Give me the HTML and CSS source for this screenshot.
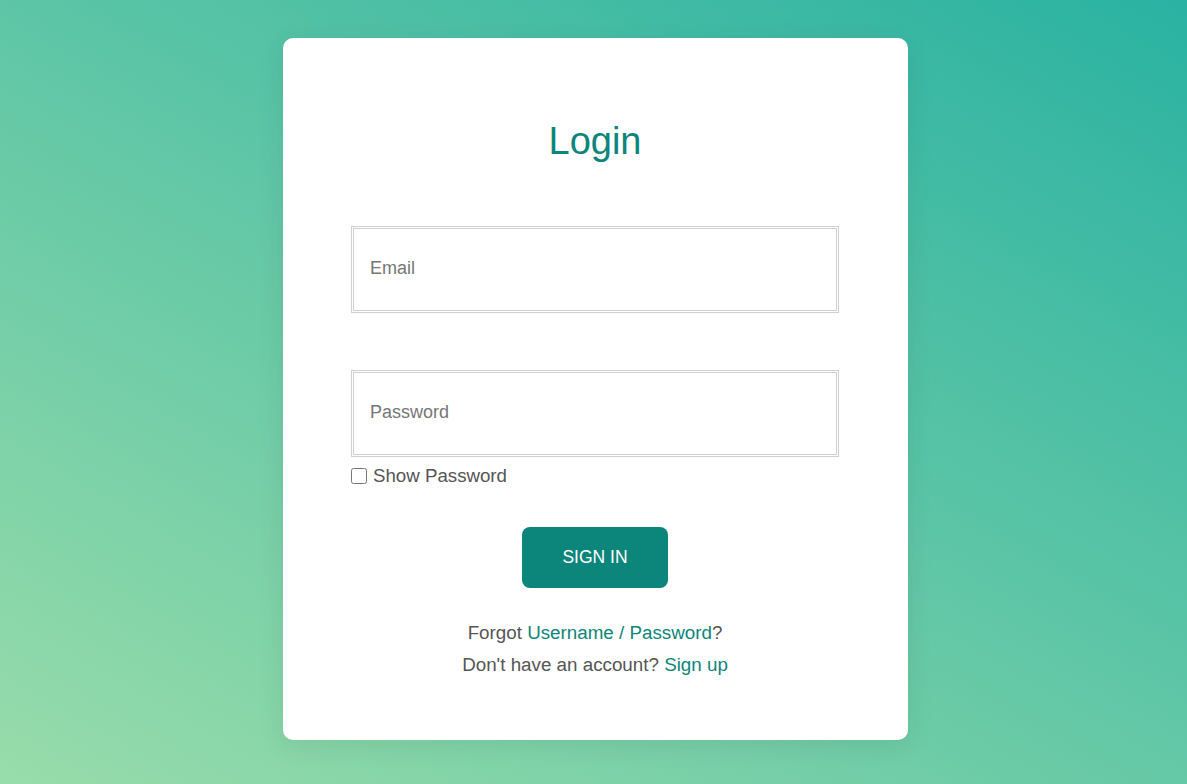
FILE: index.html
```html
<!DOCTYPE html>
<html lang="en">
<head>
<meta charset="utf-8">
<title>Login</title>
<link rel="stylesheet" href="styles.css">
</head>
<body>
  <main class="card">
    <h1 class="title">Login</h1>
    <form class="form">
      <input class="field" type="email" placeholder="Email">
      <input class="field field-password" type="password" placeholder="Password">
      <label class="show-row"><input class="check" type="checkbox">Show Password</label>
      <button class="btn" type="button">SIGN IN</button>
    </form>
    <div class="links">
      <p class="line">Forgot <a href="#" class="link">Username / Password</a>?</p>
      <p class="line">Don't have an account? <a href="#" class="link">Sign up</a></p>
    </div>
  </main>
</body>
</html>
```

FILE: styles.css
```css
html, body {
  margin: 0;
  padding: 0;
  height: 100%;
}

body {
  font-family: "Liberation Sans", Arial, sans-serif;
  background: linear-gradient(30deg, #98dcaa 0%, #2ab2a2 100%);
  overflow: hidden;
}

.card {
  box-sizing: border-box;
  width: 625px;
  height: 702px;
  margin: 38px 0 0 283px;
  padding: 81px 69px 60px 68px;
  background: #ffffff;
  border-radius: 10px;
  box-shadow: 0 6px 28px rgba(0, 0, 0, 0.08);
  display: flex;
  flex-direction: column;
}

.title {
  margin: 0;
  font-size: 38px;
  line-height: 44px;
  font-weight: 400;
  text-align: center;
  color: #0e857a;
}

.form {
  display: flex;
  flex-direction: column;
  margin-top: 63px;
}

.field {
  box-sizing: border-box;
  width: 100%;
  height: 87px;
  margin: 0;
  padding: 0 16px 2px;
  border: 3px double #d0d0d0;
  border-radius: 0;
  font-family: inherit;
  font-size: 18px;
  color: #333;
  background: #fff;
  outline: none;
}

.field::placeholder {
  color: #767676;
}

.field-password {
  margin-top: 57px;
}

.show-row {
  display: flex;
  align-items: center;
  height: 24px;
  margin-top: 7px;
  font-size: 18.7px;
  color: #555555;
}

.check {
  width: 16px;
  height: 16px;
  margin: 0 6px 0 0;
}

.btn {
  align-self: center;
  width: 146px;
  height: 61px;
  margin-top: 39px;
  border: none;
  border-radius: 8px;
  background: #0c857a;
  color: #ffffff;
  font-family: inherit;
  font-size: 17.5px;
  cursor: pointer;
}

.links {
  margin-top: 29px;
  text-align: center;
}

.line {
  margin: 0;
  font-size: 18.8px;
  line-height: 32px;
  color: #555555;
}

.link {
  color: #0e857a;
  text-decoration: none;
}
```
